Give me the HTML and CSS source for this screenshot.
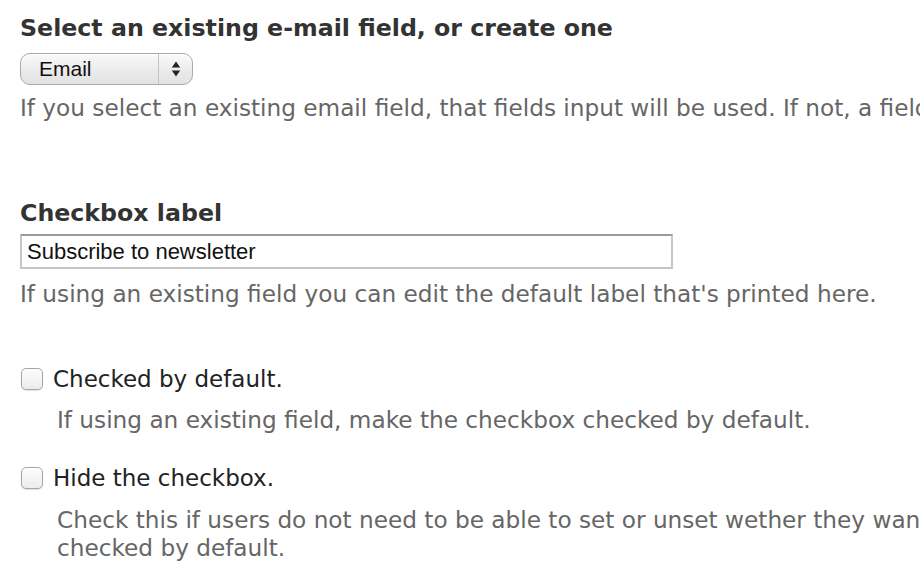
FILE: index.html
```html
<!DOCTYPE html>
<html>
<head>
<meta charset="utf-8">
<link rel="stylesheet" href="styles.css">
</head>
<body>
<div class="form">
  <div class="item item-select">
    <label class="title">Select an existing e-mail field, or create one</label>
    <div class="select">
      <span class="select-value">Email</span>
      <span class="select-arrows">
        <svg width="10" height="18" viewBox="0 0 10 18"><path d="M5 1.5 L9.2 7.5 L0.8 7.5 Z" fill="#222"/><path d="M5 16.5 L9.2 10.5 L0.8 10.5 Z" fill="#222"/></svg>
      </span>
    </div>
    <div class="description">If you select an existing email field, that fields input will be used. If not, a field will be created.</div>
  </div>

  <div class="item item-text">
    <label class="title">Checkbox label</label>
    <div class="text-input">Subscribe to newsletter</div>
    <div class="description">If using an existing field you can edit the default label that's printed here.</div>
  </div>

  <div class="item item-check first-check">
    <div class="check-row">
      <span class="checkbox"></span>
      <span class="check-label">Checked by default.</span>
    </div>
    <div class="description indent">If using an existing field, make the checkbox checked by default.</div>
  </div>

  <div class="item item-check second-check">
    <div class="check-row">
      <span class="checkbox"></span>
      <span class="check-label">Hide the checkbox.</span>
    </div>
    <div class="description indent">Check this if users do not need to be able to set or unset wether they want to subscribe<br>checked by default.</div>
  </div>
</div>
</body>
</html>
```
FILE: styles.css
```css
html, body {
  margin: 0;
  padding: 0;
  background: #fff;
  overflow: hidden;
}
body {
  font-family: "DejaVu Sans", sans-serif;
  width: 920px;
  height: 574px;
}
.form {
  width: 900px;
  height: 562px;
  overflow: hidden;
  padding: 12px 0 0 20px;
}
.title {
  display: block;
  font-weight: bold;
  font-size: 23.7px;
  line-height: 32px;
  color: #333;
}
.description {
  font-size: 23.2px;
  line-height: 28px;
  color: #666;
  white-space: nowrap;
}
.select {
  margin-top: 9px;
  width: 171px;
  height: 30px;
  border: 1px solid #aaa;
  border-radius: 10px;
  background: linear-gradient(#fafafa, #ececec 50%, #e2e2e2);
  display: flex;
  align-items: stretch;
  box-shadow: inset 0 1px 0 #fff;
}
.select-value {
  flex: 1;
  font-family: "Liberation Sans", sans-serif;
  font-size: 21px;
  line-height: 30px;
  color: #111;
  padding-left: 18px;
}
.select-arrows {
  width: 33px;
  border-left: 1px solid #c4c4c4;
  display: flex;
  align-items: center;
  justify-content: center;
}
.item-select .description {
  margin-top: 9px;
}
.item-text {
  margin-top: 75px;
}
.text-input {
  box-sizing: border-box;
  margin-top: 5px;
  width: 653px;
  height: 35px;
  border: 2px solid #c6c6c6;
  border-top-color: #9a9a9a;
  font-family: "Liberation Sans", sans-serif;
  font-size: 22px;
  line-height: 31px;
  color: #111;
  padding-left: 5px;
}
.item-text .description {
  margin-top: 11px;
}
.first-check {
  margin-top: 57px;
}
.second-check {
  margin-top: 30px;
}
.check-row {
  display: flex;
  align-items: center;
  gap: 10px;
}
.checkbox {
  width: 20px;
  height: 20px;
  border: 1px solid #a6a6a6;
  border-radius: 5px;
  background: linear-gradient(#fdfdfd, #ececec);
  box-shadow: 0 1px 1px rgba(0,0,0,0.12);
  margin-left: 1px;
}
.check-label {
  font-size: 23px;
  line-height: 28px;
  color: #222;
}
.indent {
  padding-left: 37px;
}
.first-check .indent {
  margin-top: 13px;
}
.second-check .indent {
  margin-top: 14px;
}
```
